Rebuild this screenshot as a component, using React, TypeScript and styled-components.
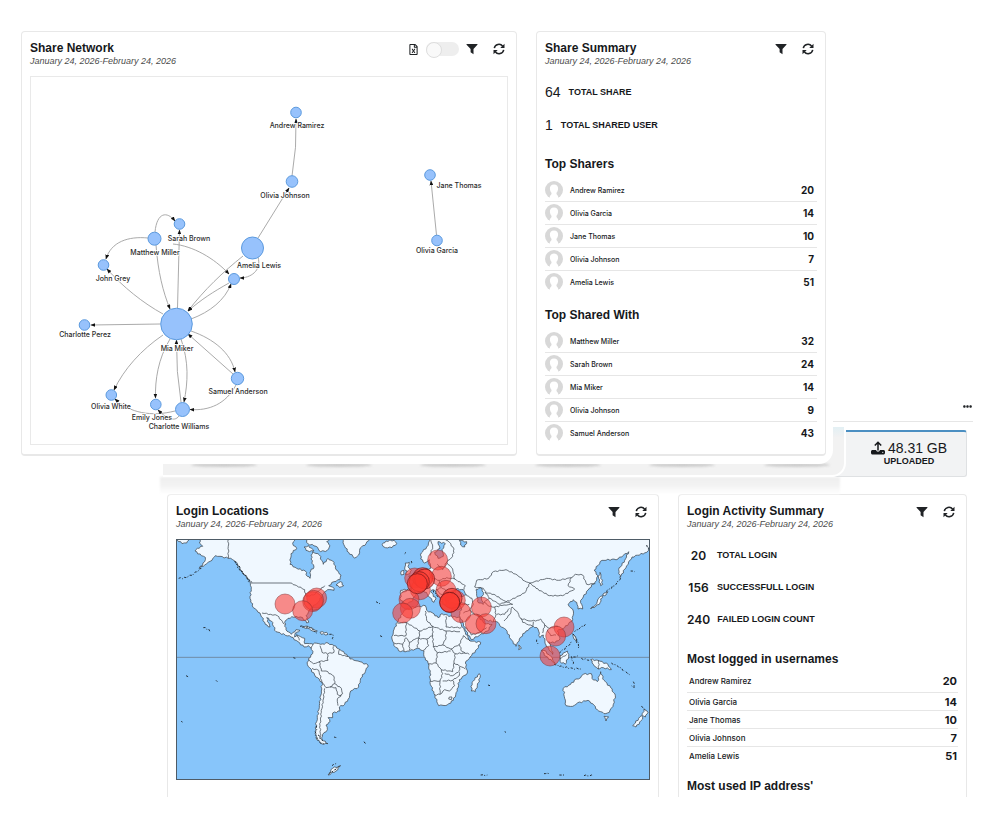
import React from "react";
import styled, { createGlobalStyle } from "styled-components";
import { FaRegFileExcel, FaEllipsisH } from "react-icons/fa";

const GlobalStyle = createGlobalStyle`
  * { box-sizing: border-box; }
  body {
    margin: 0;
    background: #fff;
    color: #16181b;
    font-family: "Liberation Sans", Arial, sans-serif;
  }
  h2, h3, p, ul { margin: 0; padding: 0; }
`;

const round = `Inter, "Liberation Sans", sans-serif`;

const Page = styled.main`
  padding-bottom: 26px;
`;

/* ---------- upper block: front sheet over the older dashboard ---------- */

const Hero = styled.div`
  position: relative;
  display: flex;
`;

const FrontSheet = styled.div`
  position: relative;
  z-index: 3;
  flex: 1;
  min-width: 0;
  display: flex;
  gap: 19px;
  margin-bottom: 13px;
  padding: 31px 7px 8px 21px;
  background: #fff;
  border-radius: 0 0 14px 0;
`;

const MiddlePlate = styled.div`
  position: absolute;
  z-index: 2;
  left: 163px;
  right: 154px;
  bottom: 0;
  height: 52px;
  display: flex;
  justify-content: space-between;
  align-items: flex-start;
  padding: 36px 14px 0 28px;
  border: 2px solid #fff;
  border-left-width: 0;
  border-radius: 0 0 14px 0;
  background:
    linear-gradient(#e3f0f4, #f1f1f2) top right / 12px 10px no-repeat,
    #f2f2f2;
`;

const CardShadow = styled.span`
  width: 66px;
  height: 4px;
  border-radius: 50%;
  background: #cdcdcd;
  filter: blur(1px);
`;

const PlateShadow = styled.div`
  position: absolute;
  z-index: 0;
  left: 160px;
  right: 160px;
  top: 100%;
  height: 17px;
  background: linear-gradient(#eeeeee, #f3f3f3 50%, #fff);
  filter: blur(1px);
`;

const SideColumn = styled.div`
  position: relative;
  z-index: 1;
  flex: 0 0 167px;
  display: flex;
  flex-direction: column;
  justify-content: flex-end;
  padding-right: 27px;
`;

const MoreBar = styled.div`
  display: flex;
  justify-content: flex-end;
  padding-bottom: 9px;
  margin-bottom: 8px;
  border-bottom: 1px solid #e6e6e6;
`;

const UploadCard = styled.div`
  margin-right: 6px;
  height: 47px;
  padding: 9px 4px 0 22px;
  border: 1px solid #dfe1e3;
  border-top: 2px solid #4b8fc2;
  border-radius: 3px;
  background: #f2f3f4;
  text-align: center;
`;

const UploadAmount = styled.p`
  display: flex;
  justify-content: center;
  align-items: center;
  gap: 3px;
  font-size: 14px;
  line-height: 14px;
`;

const UploadLabel = styled.p`
  font-size: 9px;
  line-height: 12px;
  font-weight: 700;
`;

/* ---------- cards ---------- */

const Card = styled.section<{ $width?: number; $open?: boolean }>`
  flex: ${(p) => (p.$width ? `0 0 ${p.$width}px` : "1")};
  min-width: 0;
  padding: 9px 8px;
  border: 1px solid #e8e8e8;
  border-bottom-width: ${(p) => (p.$open ? "0" : "2px")};
  border-radius: ${(p) => (p.$open ? "4px 4px 0 0" : "4px")};
  background: #fff;
`;

const CardHeader = styled.header`
  display: flex;
  justify-content: space-between;
  align-items: flex-start;
  margin-bottom: 8px;
`;

const Title = styled.h2`
  font-size: 12px;
  line-height: 14px;
  font-weight: 700;
`;

const Period = styled.p`
  font-size: 9px;
  line-height: 13px;
  font-style: italic;
  color: #4c4c4c;
`;

const Tools = styled.div<{ $gap: number }>`
  display: flex;
  align-items: center;
  gap: ${(p) => p.$gap}px;
`;

const ToolBar = styled(Tools)`
  height: 16px;
  padding-right: 3px;
`;

const IconButton = styled.button`
  display: flex;
  align-items: center;
  justify-content: center;
  width: 12px;
  height: 12px;
  padding: 0;
  border: 0;
  background: none;
  color: #202326;
  font-size: 11px;
  cursor: pointer;
`;

const Toggle = styled.input`
  appearance: none;
  flex: none;
  width: 33px;
  height: 14px;
  margin: 0;
  border-radius: 7px;
  background: #eeeeee;
  cursor: pointer;
  &::before {
    content: "";
    display: block;
    width: 14px;
    height: 14px;
    border: 1px solid #dedede;
    border-radius: 50%;
    background: #f9f9f9;
  }
  &:checked::before {
    margin-left: auto;
  }
`;

const GraphFrame = styled.div`
  border: 1px solid #e9e9e9;
  svg { display: block; width: 100%; height: auto; }
`;

const MapFrame = styled.div`
  svg { display: block; width: 100%; height: auto; }
`;

/* ---------- metrics and lists ---------- */

const Metrics = styled.div<{ $after: number }>`
  margin-bottom: ${(p) => p.$after}px;
`;

const Metric = styled.p<{ $round?: boolean }>`
  display: flex;
  align-items: center;
  gap: ${(p) => (p.$round ? 7 : 8)}px;
  height: ${(p) => (p.$round ? 32 : 33)}px;
  padding-bottom: ${(p) => (p.$round ? 0 : 2)}px;
`;

const MetricValue = styled.span<{ $round?: boolean }>`
  font-family: ${(p) => (p.$round ? round : "inherit")};
  font-size: ${(p) => (p.$round ? 12 : 14)}px;
  font-weight: ${(p) => (p.$round ? 600 : 400)};
  min-width: ${(p) => (p.$round ? "23px" : "0")};
  text-align: center;
`;

const MetricLabel = styled.span`
  font-size: 9px;
  font-weight: 700;
`;

const ListTitle = styled.h3<{ $after: number }>`
  margin-bottom: ${(p) => p.$after}px;
  font-size: 12px;
  line-height: 14px;
  font-weight: 700;
`;

const List = styled.ul`
  list-style: none;
  margin-bottom: 14px;
  &:last-child { margin-bottom: 0; }
`;

const Row = styled.li<{ $compact?: boolean }>`
  display: flex;
  align-items: center;
  height: ${(p) => (p.$compact ? 18 : 23)}px;
  padding: ${(p) => (p.$compact ? "0 1px 0 2px" : "0 3px 0 0")};
  border-bottom: 1px solid #e6e6e6;
  font-family: ${round};
  &:first-child { height: 23px; }
  &:last-child { border-bottom-color: transparent; }
`;

const PersonName = styled.span<{ $compact?: boolean }>`
  flex: 1;
  font-size: ${(p) => (p.$compact ? 8 : 7)}px;
  font-weight: 500;
`;

const Count = styled.span<{ $compact?: boolean }>`
  font-size: ${(p) => (p.$compact ? 11 : 10)}px;
  font-weight: 700;
`;

const AvatarSvg = styled.svg`
  width: 18px;
  height: 18px;
  margin-right: 7px;
`;

const Lower = styled.div`
  display: flex;
  gap: 19px;
  height: 303px;
  margin-top: 17px;
  padding: 0 33px 0 167px;
  overflow: hidden;
`;

/* ---------- icons ---------- */

function Avatar() {
  return (
    <AvatarSvg viewBox="0 0 18 18" aria-hidden="true">
      <circle cx="9" cy="9" r="9" fill="#d8d8d8" />
      <path
        d="M9 3.600c-2.900 0-4.300 2-4.100 4.500.2 2 1 3.100 1.700 4-.1 1.400-.8 2-1.600 2.800L4.400 18h9.200l-.6-3.100c-.8-.8-1.500-1.400-1.600-2.800.7-.9 1.500-2 1.700-4C13.300 5.600 11.900 3.600 9 3.600z"
        fill="#fff"
      />
    </AvatarSvg>
  );
}

function FilterIcon() {
  return (
    <svg width="12" height="12" viewBox="0 0 12 12" aria-hidden="true">
      <path d="M.9.900h10.200c.4 0 .6.500.3.800L7.500 6v5.300L4.600 9.300V6L.6 1.700C.3 1.400.5.900.9.900z" fill="currentColor" />
    </svg>
  );
}

function RefreshIcon() {
  return (
    <svg width="12" height="12" viewBox="0 0 12 12" aria-hidden="true">
      <path d="M1.300 5.200A4.700 4.700 0 0 1 9.700 3.200M10.700 6.800A4.700 4.700 0 0 1 2.300 8.800" fill="none" stroke="currentColor" strokeWidth="1.500" />
      <path d="M11.500.700V4.900H7.300zM.5 11.300V7.100h4.200z" fill="currentColor" />
    </svg>
  );
}

function UploadIcon() {
  return (
    <svg width="14" height="14" viewBox="0 0 14 14" aria-hidden="true">
      <path d="M7 9.500V2M3.800 4.600 7 1.300l3.200 3.300" fill="none" stroke="#16181b" strokeWidth="1.500" />
      <path d="M1.500 9h3.700c0 2.300 3.600 2.300 3.600 0h3.700c.8 0 1.500.7 1.500 1.500V12c0 .8-.7 1.500-1.500 1.500h-11C.7 13.500 0 12.800 0 12v-1.500C0 9.700.7 9 1.500 9z" fill="#16181b" />
      <circle cx="11.800" cy="11.300" r=".6" fill="#fff" />
    </svg>
  );
}

/* ---------- share network ---------- */

const nodes: [number, number, number][] = [
  [296, 112.500, 5.300], [292, 181.500, 5.800], [430, 175, 5.300], [437, 240.500, 5.300],
  [179.500, 224, 5.300], [154.500, 238.700, 6.500], [252.500, 248, 11], [103.500, 265, 5.300],
  [234, 279, 5.500], [176.500, 324, 15.800], [84.500, 325, 5.300], [237.500, 378.500, 6.200],
  [111.300, 395, 5.300], [155.800, 404.500, 5.300], [182.500, 409.500, 7],
];

const labels: [number, number, string][] = [
  [297, 128, "Andrew Ramirez"], [285, 198, "Olivia Johnson"], [459, 188, "Jane Thomas"],
  [437, 253, "Olivia Garcia"], [189, 241, "Sarah Brown"], [155, 255, "Matthew Miller"],
  [259, 268, "Amelia Lewis"], [113, 281, "John Grey"], [85, 337, "Charlotte Perez"],
  [177, 351, "Mia Miker"], [238, 394, "Samuel Anderson"], [111, 409, "Olivia White"],
  [152, 420, "Emily Jones"], [179, 429, "Charlotte Williams"],
];

const edges = [
  "M292 176Q297 147 296 119",
  "M258 238L289 188",
  "M436.500 235L431 181",
  "M155 232C157 212 167 211 175 221",
  "M148 238C128 236 111 242 106 259",
  "M156 245C158 272 163 292 170 309",
  "M177.500 308L179.500 230",
  "M173 244C193 246 214 258 229 274",
  "M243 256C223 272 204 290 188 311",
  "M258 257C262 271 250 278 240 278",
  "M229 283C213 292 202 299 188 311",
  "M191 319C210 312 225 300 231 284",
  "M163 314C143 303 123 287 107 269",
  "M160 324L91 325",
  "M163 335C141 350 124 369 114 390",
  "M170 339C158 359 155 380 155.500 398",
  "M181 339C189 362 188 382 184 402",
  "M181 402Q176 372 176.500 340",
  "M191 331C214 339 231 353 235 372",
  "M233 374L188 334",
  "M236 385C226 404 209 411 190 409.500",
  "M175 411C151 417 130 413 115 399",
  "M179 416C174 423 165 417 158 410",
];

function NetworkGraph() {
  return (
    <svg viewBox="31 77 476 367" role="img" aria-label="Share network">
      <defs>
        <marker id="tip" viewBox="0 0 8 6" refX="7" refY="3" markerWidth="5" markerHeight="4" markerUnits="userSpaceOnUse" orient="auto">
          <path d="M0 0 8 3 0 6z" fill="#111" />
        </marker>
      </defs>
      <g fill="none" stroke="#a0a0a0" strokeWidth=".9">
        {edges.map((d) => (
          <path key={d} d={d} markerEnd="url(#tip)" />
        ))}
      </g>
      <g fill="#97c2fc" stroke="#5c9ade" strokeWidth="1">
        {nodes.map(([x, y, r]) => (
          <circle key={`${x}-${y}`} cx={x} cy={y} r={r} />
        ))}
      </g>
      <g fontFamily={round} fontSize="7" fontWeight="500" fill="#2b2b2b" stroke="#fff" strokeWidth="1.500" paintOrder="stroke" textAnchor="middle">
        {labels.map(([x, y, name]) => (
          <text key={name} x={x} y={y}>{name}</text>
        ))}
      </g>
    </svg>
  );
}

/* ---------- world map ---------- */

type Pt = [number, number];

function parse(s: string): Pt[] {
  const n = s.trim().split(/[\s,]+/).map(Number);
  const out: Pt[] = [];
  for (let i = 0; i + 1 < n.length; i += 2) out.push([n[i], n[i + 1]]);
  return out;
}

/* Breaks long segments into short steps with a small repeatable wobble, as coasts and borders have. */
function trace(s: string, closed: boolean, amp = 2.2): string {
  const pts = parse(s);
  if (closed) pts.push(pts[0]);
  let d = `M${pts[0][0]} ${pts[0][1]}`;
  for (let i = 1; i < pts.length; i++) {
    const [ax, ay] = pts[i - 1];
    const [bx, by] = pts[i];
    const len = Math.hypot(bx - ax, by - ay) || 1;
    const steps = Math.min(8, Math.max(1, Math.round(len / 6)));
    const onEdge = (ay <= 1 && by <= 1) || (ax >= 1421 && bx >= 1421) || (ax <= 3 && bx <= 3);
    if (!onEdge) {
      for (let k = 1; k < steps; k++) {
        const t = k / steps;
        const w = Math.sin(ax * 12.9 + by * 7.1 + k * 2.4) * amp;
        d += `L${(ax + (bx - ax) * t - ((by - ay) / len) * w).toFixed(1)} ${(ay + (by - ay) * t + ((bx - ax) / len) * w).toFixed(1)}`;
      }
    }
    d += `L${bx} ${by}`;
  }
  return closed ? d + "Z" : d;
}

const land = [
  // North and Central America
  "72,0 70,12 80,22 64,28 57,36 76,50 88,55 86,68 70,88 92,74 108,64 118,50 132,52 157,58 170,62 182,70 192,92 206,108 222,128 226,145 222,178 232,206 252,222 268,256 282,264 272,236 286,246 300,278 345,294 366,308 384,324 398,320 408,328 414,318 400,314 386,314 386,298 368,290 356,294 358,282 372,274 360,272 346,286 330,272 326,250 336,238 360,232 380,236 392,252 398,250 390,230 405,208 428,188 442,164 455,152 474,154 470,144 458,140 474,128 492,122 495,108 480,92 474,70 456,58 442,76 430,48 410,38 405,60 414,84 404,96 402,118 394,112 388,96 362,88 342,76 345,44 362,28 350,14 356,0",
  "384,24 398,20 414,36 400,38 390,34",
  "388,0 396,14 420,22 434,38 454,34 462,20 452,8 462,0",
  "480,138 494,128 503,140 490,145",
  "498,0 506,22 518,40 536,57 548,48 552,28 570,14 582,0",
  "3,2 18,14 32,12 38,4 28,0 3,0",
  "618,16 630,6 654,4 662,14 648,26 628,26",
  // Caribbean
  "378,264 396,262 424,276 410,276 394,268",
  "432,280 452,280 456,286 436,286",
  // South America
  "406,324 416,312 434,316 456,312 474,320 492,332 512,346 522,360 546,366 576,378 568,398 554,418 548,444 524,456 520,476 506,496 490,504 492,516 470,522 470,536 456,536 462,548 450,558 454,572 440,586 438,602 456,614 436,614 420,596 418,566 424,536 430,500 436,456 438,430 416,408 394,376 398,358 410,344",
  // Africa
  "684,214 704,206 748,200 752,214 770,222 786,236 798,224 830,234 848,234 856,256 868,280 882,306 914,310 904,330 882,354 868,372 874,402 850,422 844,456 832,484 814,498 788,500 774,464 762,430 762,402 756,372 744,352 744,336 724,328 700,336 674,338 654,320 648,300 652,276 664,250",
  "910,404 912,416 898,458 886,456 888,430",
  // Europe and Asia
  "764,0 752,24 736,42 734,60 746,72 760,62 764,88 744,92 722,104 698,112 712,126 708,150 674,154 674,184 690,196 706,188 720,164 742,154 754,166 774,190 780,180 764,158 772,152 790,172 800,196 812,196 808,176 820,172 816,190 852,196 856,206 850,230 860,250 870,276 886,302 934,276 948,256 926,254 902,226 932,244 966,250 976,264 990,272 1004,300 1020,322 1030,300 1050,276 1072,262 1086,270 1092,296 1102,288 1110,318 1130,346 1124,322 1118,308 1136,312 1152,300 1144,276 1166,266 1190,242 1192,216 1176,196 1192,182 1202,190 1206,210 1220,210 1214,184 1240,148 1262,124 1266,110 1254,94 1278,64 1326,60 1358,38 1346,64 1328,92 1332,116 1352,80 1368,54 1412,40 1422,22 1422,0",
  "690,108 702,104 706,94 696,82 700,70 688,72 686,90 694,96",
  "676,108 684,106 684,94 676,96",
  "1272,100 1280,136 1274,140 1268,118",
  "1284,162 1296,158 1290,168 1280,168",
  "1280,170 1270,196 1244,210 1262,194 1268,178",
  "1028,318 1036,328 1028,332",
  "1138,374 1110,352 1096,334 1104,334 1124,352",
  "1152,350 1174,336 1178,352 1168,376 1152,368",
  "1190,286 1198,292 1202,312 1194,300",
  "1244,362 1266,364 1296,376 1306,392 1282,386 1266,390 1252,376",
  // Australia and New Zealand
  "1162,448 1184,436 1200,420 1214,416 1222,406 1246,404 1248,418 1264,428 1274,398 1284,424 1304,446 1318,470 1312,496 1300,520 1284,524 1264,512 1250,494 1236,484 1204,492 1190,502 1170,500 1166,478",
  "1284,532 1298,534 1290,546",
  "1404,510 1416,520 1408,534 1398,530",
  "1396,530 1400,540 1380,564 1370,560",
  // Antarctic Peninsula tip
  "456,708 470,688 494,680 480,696",
];

const water = [
  "786,8 808,14 798,32 802,52 786,58 776,40 792,28",
  "850,4 872,8 866,24 854,18",
  "826,164 840,150 862,152 872,168 850,174 828,172",
  "900,152 914,146 922,160 916,180 922,196 908,192 902,170",
];

const borders = [
  "157,0 157,58", "342,132 362,140 386,152 390,172 412,168 430,154 446,140",
  "258,222 284,226 304,230 326,256", "362,284 370,304", "398,362 412,374 432,368",
  "432,320 438,340 454,344 456,364 430,368 436,396 450,396 474,412 476,434 496,448 500,464 484,480",
  "456,344 474,340 472,322", "490,332 488,346 500,350 516,352", "438,430 450,446 462,444 476,434",
  "446,448 442,480 436,520 432,560 434,600", "462,444 480,446 484,466 496,470", "484,480 486,500", "408,388 428,394 438,430",
  "664,252 690,250 690,290 654,290", "690,250 732,276 770,262 770,290 752,300 722,298 700,310 690,296",
  "748,216 752,244 770,262", "810,232 810,264 856,266", "770,262 810,276 810,296 800,318 772,324 770,290",
  "732,276 728,300 724,326", "752,300 758,320 742,334", "810,276 852,278", "800,318 824,330 850,316 862,290 882,306",
  "850,316 858,338 880,346", "824,330 838,344 868,342", "838,344 834,372 868,390", "772,324 784,342 824,336",
  "784,342 780,372 796,392 830,398 834,372", "756,376 780,372", "762,426 792,426 800,404 796,392", "792,426 792,466 776,468",
  "792,466 806,452 820,456 836,440 830,424 800,426", "830,424 850,410 850,384", "806,404 830,410 846,400",
  "700,310 700,334", "680,316 684,336", "654,312 680,316 690,296", "820,474 828,474 826,482 818,480 820,474",
  // Europe and Asia
  "764,0 770,24 762,50", "806,0 820,10 834,30 830,52", "830,52 812,70 830,90 836,120 868,140 864,152",
  "760,92 764,116 748,134", "720,106 736,122 742,150", "764,116 790,124 812,116 836,120", "676,160 708,152",
  "784,76 800,92 812,70", "790,124 796,146 820,160", "796,146 780,152 806,176",
  "872,170 888,178 892,196 880,214", "852,196 880,196", "880,214 862,222", "880,214 898,228", "872,266 886,288 910,280 932,266",
  "896,144 902,124 938,118 952,98 990,92 1024,108 1046,126 1062,132 1112,118 1148,124 1186,116 1198,106 1220,108 1232,136 1258,134",
  "1062,132 1080,148 1120,170 1160,170 1196,150 1176,140 1186,116", "896,144 922,148 940,178 972,196 1006,182 1046,162 1062,132",
  "926,160 954,166 982,184 1010,196", "940,178 924,190 940,202 956,204 960,226 952,248", "956,204 984,198 1010,196",
  "984,246 1002,226 1008,204 1022,216 1034,238 1062,246 1084,244", "962,226 986,226 1000,208",
  "1034,238 1040,250 1070,262 1072,248", "1084,244 1094,240 1106,258 1100,282", "1106,258 1120,268 1146,262",
  "1114,272 1124,290 1140,288", "1268,364 1268,390", "1152,360 1172,346",
];

const dotted = [
  "8,118 30,116 54,104 76,88", "82,266 98,270 102,278", "176,66 188,80 196,96 214,116 228,132", "180,74 190,92 208,110 222,132",
  "372,262 404,266 422,282", "460,286 470,286 472,304", "422,560 418,590 428,608 446,616", "426,588 440,606",
  "474,594 484,596", "564,608 572,614", "460,704 476,692 490,682", "468,680 484,672", "600,188 612,194", "986,578 990,580",
  "1134,376 1160,384 1190,388 1214,390", "1186,352 1192,374 1188,378", "1192,354 1206,350", "1216,358 1240,364",
  "1190,284 1202,300 1210,324 1202,328", "1150,342 1190,308", "1290,158 1320,136 1334,116", "1364,96 1376,98",
  "1306,372 1324,380 1346,396", "1350,398 1362,408", "1372,428 1378,444 1366,440", "1396,502 1410,516", "1228,256 1196,278",
  "690,40 686,44", "706,66 704,76", "772,154 780,168 786,176", "612,290 620,294", "352,356 358,358",
  "1104,704 1120,704", "1150,708 1164,708", "1224,710 1252,710", "914,708 934,708", "1412,18 1420,30",
  "1082,302 1084,320", "30,410 38,414", "936,438 942,440", "120,424 124,428", "16,546 19,550",
];

const logins: [number, number][] = [
  [327, 195], [422, 177], [410, 188], [413, 184], [380, 215],
  [785, 63], [796, 112], [810, 154], [716, 117], [733, 152], [699, 182], [703, 208], [680, 222],
  [838, 184], [855, 221], [916, 204], [898, 255], [930, 254],
  [1164, 264], [1139, 291], [1122, 351],
];

const busyLogins: [number, number][] = [[740, 116], [746, 120], [730, 128], [724, 134], [828, 178], [821, 190], [821, 190]];

function WorldMap() {
  return (
    <svg viewBox="0 0 1422 723" role="img" aria-label="Login locations on a world map">
      <rect width="1422" height="723" fill="#87c5fa" />
      <path d="M0 355H1422" stroke="#6f8ca6" strokeWidth="3" />
      <g fill="#f0f8ff" stroke="#3d454d" strokeWidth="2.200" strokeLinejoin="round">
        {land.map((s) => <path key={s} d={trace(s, true)} />)}
      </g>
      <g fill="#87c5fa" stroke="#3d454d" strokeWidth="2.200">
        {water.map((s) => <path key={s} d={trace(s, true)} />)}
      </g>
      <g fill="none" stroke="#3d454d" strokeWidth="2.200">
        <path d="M224 132H342" />
        {borders.map((s) => <path key={s} d={trace(s, false, 1.6)} />)}
      </g>
      <g fill="none" stroke="#26323c" strokeWidth="3" strokeDasharray="7 4 3 5">
        {dotted.map((s) => <path key={s} d={trace(s, false)} />)}
      </g>
      <g fill="#fb3a34" fillOpacity=".58" stroke="#7d2b2e" strokeOpacity=".7" strokeWidth="2">
        {logins.map(([x, y]) => <circle key={`${x}-${y}`} cx={x} cy={y} r="30" />)}
      </g>
      <g fill="#fb3a30" fillOpacity=".72" stroke="#6e1518" strokeWidth="2">
        {busyLogins.map(([x, y], i) => <circle key={i} cx={x} cy={y} r="30" />)}
      </g>
      <rect x="1.5" y="1.5" width="1419" height="720" fill="none" stroke="#4e5b66" strokeWidth="3" />
    </svg>
  );
}

/* ---------- shared pieces ---------- */

function Header({ title, extra }: { title: string; extra?: React.ReactNode }) {
  return (
    <CardHeader>
      <div>
        <Title>{title}</Title>
        <Period>January 24, 2026-February 24, 2026</Period>
      </div>
      <ToolBar $gap={7}>
        {extra}
        <Tools $gap={15}>
          <IconButton type="button" aria-label={`Filter ${title}`}><FilterIcon /></IconButton>
          <IconButton type="button" aria-label={`Refresh ${title}`}><RefreshIcon /></IconButton>
        </Tools>
      </ToolBar>
    </CardHeader>
  );
}

function People({ rows, compact }: { rows: [string, number][]; compact?: boolean }) {
  return (
    <List>
      {rows.map(([name, count]) => (
        <Row key={name} $compact={compact}>
          {!compact && <Avatar />}
          <PersonName $compact={compact}>{name}</PersonName>
          <Count $compact={compact}>{count}</Count>
        </Row>
      ))}
    </List>
  );
}

const sharers: [string, number][] = [
  ["Andrew Ramirez", 20], ["Olivia Garcia", 14], ["Jane Thomas", 10], ["Olivia Johnson", 7], ["Amelia Lewis", 51],
];
const sharedWith: [string, number][] = [
  ["Matthew Miller", 32], ["Sarah Brown", 24], ["Mia Miker", 14], ["Olivia Johnson", 9], ["Samuel Anderson", 43],
];

export default function App() {
  return (
    <Page>
      <GlobalStyle />
      <Hero>
        <FrontSheet>
          <Card>
            <Header
              title="Share Network"
              extra={
                <>
                  <IconButton type="button" aria-label="Export to Excel"><FaRegFileExcel /></IconButton>
                  <Toggle type="checkbox" role="switch" aria-label="Toggle network view" />
                </>
              }
            />
            <GraphFrame><NetworkGraph /></GraphFrame>
          </Card>
          <Card $width={290}>
            <Header title="Share Summary" />
            <Metrics $after={15}>
              <Metric><MetricValue>64</MetricValue><MetricLabel>TOTAL SHARE</MetricLabel></Metric>
              <Metric><MetricValue>1</MetricValue><MetricLabel>TOTAL SHARED USER</MetricLabel></Metric>
            </Metrics>
            <ListTitle $after={8}>Top Sharers</ListTitle>
            <People rows={sharers} />
            <ListTitle $after={8}>Top Shared With</ListTitle>
            <People rows={sharedWith} />
          </Card>
        </FrontSheet>
        <MiddlePlate aria-hidden="true">
          {[0, 1, 2, 3, 4, 5].map((i) => <CardShadow key={i} />)}
        </MiddlePlate>
        <PlateShadow aria-hidden="true" />
        <SideColumn>
          <MoreBar>
            <IconButton type="button" aria-label="More options"><FaEllipsisH size={9} /></IconButton>
          </MoreBar>
          <UploadCard>
            <UploadAmount><UploadIcon />48.31 GB</UploadAmount>
            <UploadLabel>UPLOADED</UploadLabel>
          </UploadCard>
        </SideColumn>
      </Hero>
      <Lower>
        <Card $open>
          <Header title="Login Locations" />
          <MapFrame><WorldMap /></MapFrame>
        </Card>
        <Card $width={289} $open>
          <Header title="Login Activity Summary" />
          <Metrics $after={17}>
            <Metric $round><MetricValue $round>20</MetricValue><MetricLabel>TOTAL LOGIN</MetricLabel></Metric>
            <Metric $round><MetricValue $round>156</MetricValue><MetricLabel>SUCCESSFULL LOGIN</MetricLabel></Metric>
            <Metric $round><MetricValue $round>240</MetricValue><MetricLabel>FAILED LOGIN COUNT</MetricLabel></Metric>
          </Metrics>
          <ListTitle $after={4}>Most logged in usernames</ListTitle>
          <People rows={sharers} compact />
          <ListTitle $after={4}>Most used IP address'</ListTitle>
        </Card>
      </Lower>
    </Page>
  );
}
